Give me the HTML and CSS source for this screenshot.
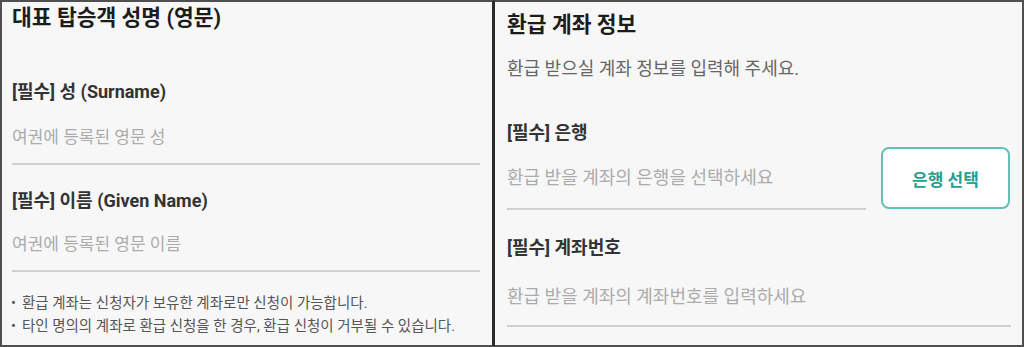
FILE: index.html
```html
<!DOCTYPE html>
<html lang="ko">
<head>
<meta charset="utf-8">
<link rel="stylesheet" href="styles.css">
</head>
<body>
<div class="page">
  <section class="panel panel-left">
    <h2 class="title">대표 탑승객 성명 (영문)</h2>
    <div class="field field-first">
      <div class="label">[필수] 성 (Surname)</div>
      <div class="input input-name"><span class="ph">여권에 등록된 영문 성</span></div>
    </div>
    <div class="field field-second">
      <div class="label">[필수] 이름 (Given Name)</div>
      <div class="input input-name"><span class="ph">여권에 등록된 영문 이름</span></div>
    </div>
    <ul class="notes">
      <li>환급 계좌는 신청자가 보유한 계좌로만 신청이 가능합니다.</li>
      <li>타인 명의의 계좌로 환급 신청을 한 경우, 환급 신청이 거부될 수 있습니다.</li>
    </ul>
  </section>
  <section class="panel panel-right">
    <h2 class="title title-right">환급 계좌 정보</h2>
    <p class="sub">환급 받으실 계좌 정보를 입력해 주세요.</p>
    <div class="label label-bank">[필수] 은행</div>
    <div class="bank-row">
      <div class="input input-bank"><span class="ph">환급 받을 계좌의 은행을 선택하세요</span></div>
      <button class="bank-btn" type="button">은행 선택</button>
    </div>
    <div class="label label-acct">[필수] 계좌번호</div>
    <div class="input input-acct"><span class="ph">환급 받을 계좌의 계좌번호를 입력하세요</span></div>
  </section>
</div>
</body>
</html>
```
FILE: styles.css
```css
* { box-sizing: border-box; }
html, body { margin: 0; padding: 0; }
body {
  width: 1024px;
  height: 347px;
  overflow: hidden;
  background: #f7f7f7;
  font-family: Roboto, "Noto Sans CJK KR", "Noto Sans", sans-serif;
  color: #333;
}
.page {
  display: flex;
  height: 347px;
}
.panel {
  background: #f7f7f7;
  height: 347px;
  border: 2px solid #505050;
}
.panel-left {
  width: 494px;
  padding: 0 12px 0 10px;
  border-right: 2px solid #2a2a2a;
}
.panel-right {
  width: 530px;
  padding: 0 11px 0 12px;
  border-left: 1px solid #2a2a2a;
}
.title {
  margin: 2px 0 0;
  font-size: 21.5px;
  line-height: 28px;
  font-weight: 700;
  color: #1c1c1c;
}
.title-right {
  margin-top: 9px;
}
.label {
  font-size: 18px;
  line-height: 24px;
  font-weight: 700;
  color: #333;
}
.input {
  border-bottom: 2px solid #cfcfcf;
  font-size: 18px;
  line-height: 24px;
}
.input-name { font-size: 17px; }
.ph { color: #ababab; }
.field-first { margin-top: 48px; }
.field-first .input { padding: 21px 0 14px; }
.field-second { margin-top: 24px; }
.field-second .input { padding: 19px 0 14px; }
.notes {
  list-style: none;
  margin: 20px 0 0;
  padding: 0;
  font-size: 14.5px;
  line-height: 23px;
  color: #555;
}
.notes li {
  display: flex;
  gap: 6px;
  margin-left: -1px;
}
.notes li::before {
  content: "•";
  color: #555;
}
.sub {
  margin: 18px 0 0;
  font-size: 18px;
  line-height: 24px;
  color: #666;
}
.label-bank { margin-top: 40px; }
.bank-row {
  display: flex;
  align-items: flex-end;
  gap: 15px;
  margin-top: 2px;
}
.input-bank {
  flex: 1;
  padding: 18px 0 18px;
}
.bank-btn {
  width: 129px;
  height: 62px;
  border: 2px solid #5ec3b3;
  border-radius: 8px;
  background: #fff;
  color: #23a08f;
  font-family: inherit;
  font-size: 17px;
  font-weight: 700;
  margin-right: 1px;
  margin-bottom: 1px;
}
.label-acct { margin-top: 26px; }
.input-acct { padding: 25px 0 16px; }
```
